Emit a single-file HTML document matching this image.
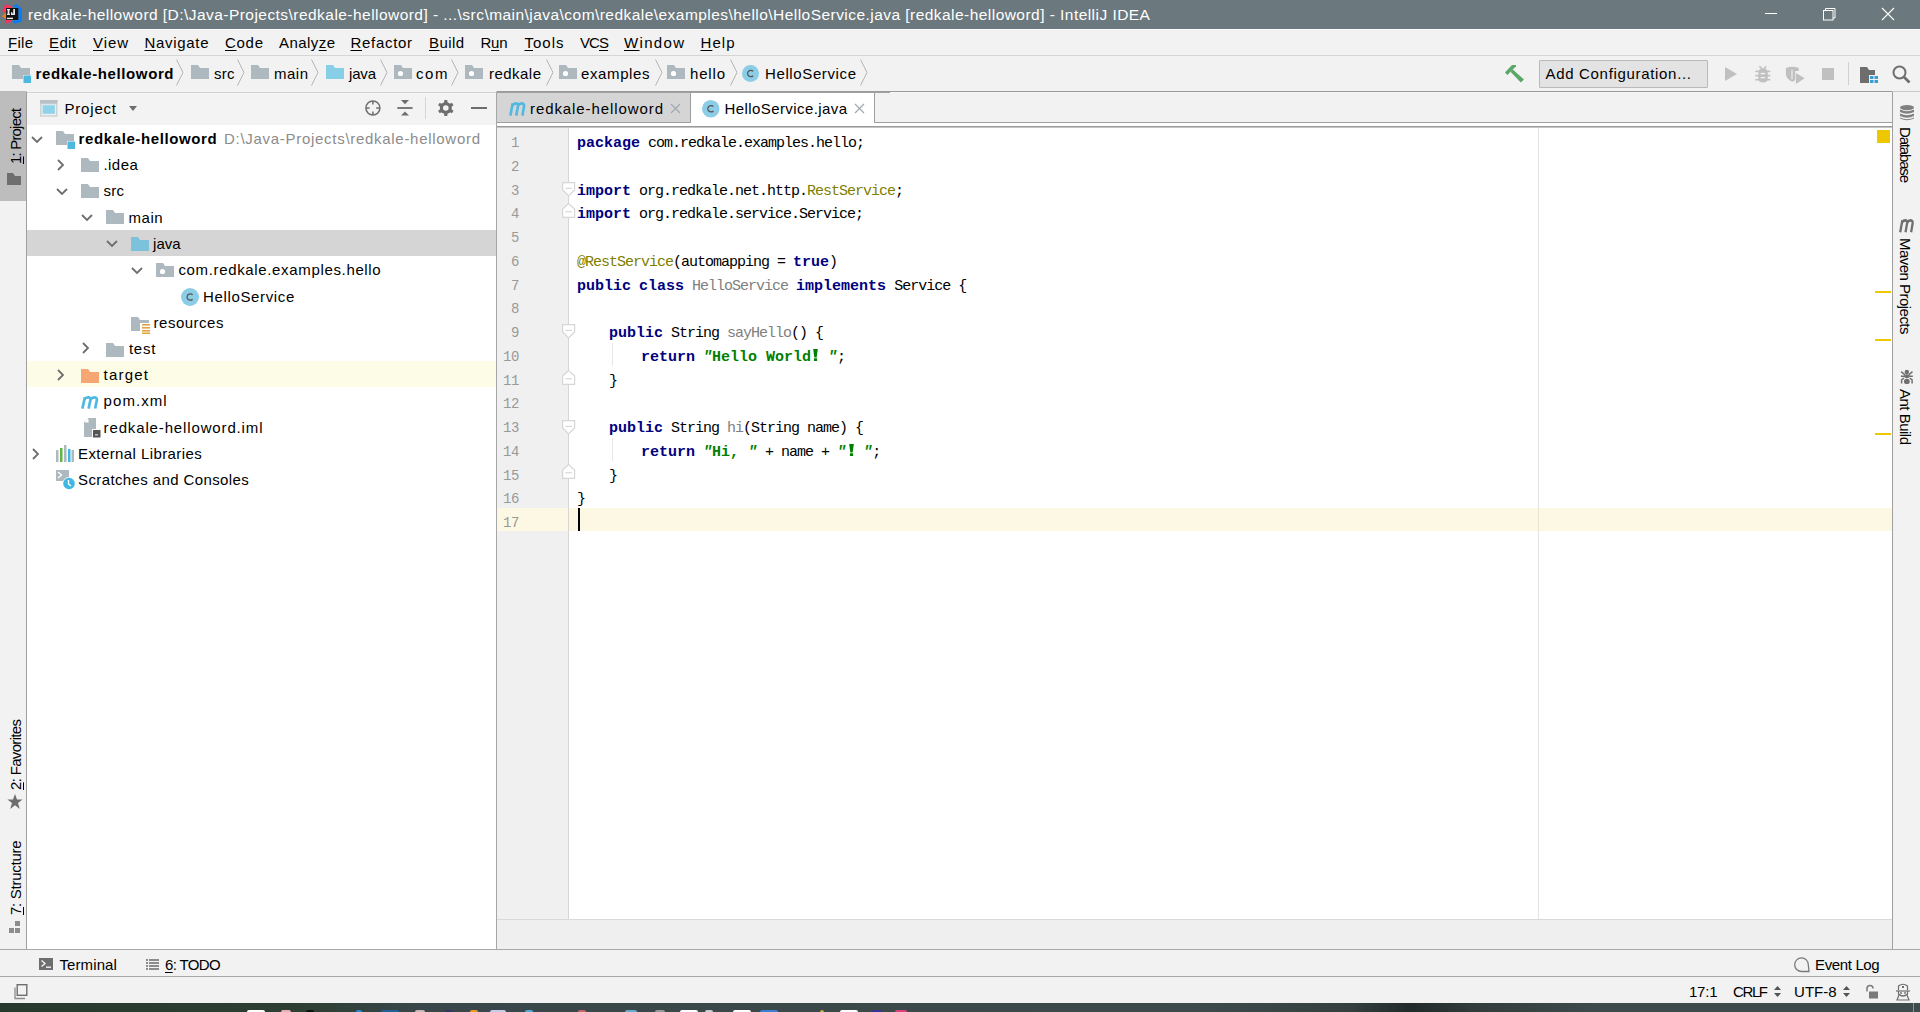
<!DOCTYPE html>
<html><head><meta charset="utf-8"><style>*{margin:0;padding:0;box-sizing:border-box}
html,body{width:1920px;height:1012px;overflow:hidden;background:#f2f2f2;font-family:"Liberation Sans",sans-serif;font-size:15px;color:#000}
.a{position:absolute}
.t{position:absolute;white-space:pre;line-height:1}
u{text-decoration:underline;text-underline-offset:2px;text-decoration-thickness:1px}
svg{position:absolute;overflow:visible}
.c{position:absolute;white-space:pre;line-height:1;font-family:"Liberation Mono",monospace;font-size:15px;letter-spacing:-1px}
.c b{letter-spacing:0}
</style></head><body>
<div class="a" style="left:0px;top:0px;width:1920px;height:29px;background:#6b787d;"></div>
<svg style="left:0px;top:0px;" width="28" height="28" viewBox="0 0 28 28">
<polygon points="5.5,3.9 11.5,6.4 12,8 6,8 6,13 2,11.5" fill="#fe315d"/>
<polygon points="5,19 12,19.5 11.5,21.5 5.3,23.8" fill="#fe315d"/>
<polygon points="2,16.3 6.2,12.5 6.2,19" fill="#f97a12"/>
<polygon points="12.5,6.5 16.5,3.9 22,9 22,21.5 15,23.8 11.5,21 18.3,20 18.3,8" fill="#087cfa"/>
<rect x="6.1" y="8" width="12.2" height="12" fill="#111"/>
<g fill="#e8e8e8"><rect x="7.6" y="9" width="1.8" height="6"/><rect x="6.9" y="9" width="3.1" height="1.2"/><rect x="6.9" y="13.8" width="3.1" height="1.2"/>
<rect x="13.2" y="9" width="1.8" height="5.2"/><rect x="11" y="13.6" width="4" height="1.4"/><rect x="11" y="12.2" width="1.4" height="2"/>
<rect x="6.9" y="17.7" width="6.1" height="1.4"/></g>
</svg>
<div class="t" style="left:28px;top:6.83px;font-size:15.5px;color:#fff;font-weight:normal;letter-spacing:0.455px;">redkale-helloword [D:\Java-Projects\redkale-helloword] - ...\src\main\java\com\redkale\examples\hello\HelloService.java [redkale-helloword] - IntelliJ IDEA</div>
<div class="a" style="left:1765px;top:13px;width:12px;height:1px;background:#fff;"></div>
<svg style="left:1823px;top:8px;" width="13" height="13" viewBox="0 0 13 13"><rect x="0.5" y="2.5" width="9.5" height="9.5" fill="none" stroke="#fff" stroke-width="1"/><path d="M2.5 2.5V0.5H12V10H10" fill="none" stroke="#fff" stroke-width="1"/></svg>
<svg style="left:1882px;top:8px;" width="12" height="12" viewBox="0 0 12 12"><path d="M0 0L12 12M12 0L0 12" stroke="#fff" stroke-width="1.1"/></svg>
<div class="a" style="left:0px;top:29px;width:1920px;height:1px;background:#fbfbfb;"></div>
<div class="a" style="left:0px;top:30px;width:1920px;height:25px;background:#f2f2f2;"></div>
<div class="a" style="left:0px;top:55px;width:1920px;height:1px;background:#d5d5d5;"></div>
<div class="t" style="left:8px;top:35.25px;font-size:15px;color:#000;font-weight:normal;letter-spacing:0.276px;"><u>F</u>ile</div>
<div class="t" style="left:49px;top:35.25px;font-size:15px;color:#000;font-weight:normal;letter-spacing:0.384px;"><u>E</u>dit</div>
<div class="t" style="left:93px;top:35.25px;font-size:15px;color:#000;font-weight:normal;letter-spacing:0.919px;"><u>V</u>iew</div>
<div class="t" style="left:144.5px;top:35.25px;font-size:15px;color:#000;font-weight:normal;letter-spacing:0.685px;"><u>N</u>avigate</div>
<div class="t" style="left:225px;top:35.25px;font-size:15px;color:#000;font-weight:normal;letter-spacing:0.713px;"><u>C</u>ode</div>
<div class="t" style="left:279px;top:35.25px;font-size:15px;color:#000;font-weight:normal;letter-spacing:0.439px;">Analy<u>z</u>e</div>
<div class="t" style="left:350.5px;top:35.25px;font-size:15px;color:#000;font-weight:normal;letter-spacing:0.687px;"><u>R</u>efactor</div>
<div class="t" style="left:429px;top:35.25px;font-size:15px;color:#000;font-weight:normal;letter-spacing:0.411px;"><u>B</u>uild</div>
<div class="t" style="left:480.5px;top:35.25px;font-size:15px;color:#000;font-weight:normal;letter-spacing:-0.259px;">R<u>u</u>n</div>
<div class="t" style="left:524.5px;top:35.25px;font-size:15px;color:#000;font-weight:normal;letter-spacing:0.996px;"><u>T</u>ools</div>
<div class="t" style="left:580px;top:35.25px;font-size:15px;color:#000;font-weight:normal;letter-spacing:-0.922px;">VC<u>S</u></div>
<div class="t" style="left:624px;top:35.25px;font-size:15px;color:#000;font-weight:normal;letter-spacing:1.330px;"><u>W</u>indow</div>
<div class="t" style="left:700.5px;top:35.25px;font-size:15px;color:#000;font-weight:normal;letter-spacing:1.050px;"><u>H</u>elp</div>
<div class="a" style="left:0px;top:56px;width:1920px;height:35px;background:#f2f2f2;"></div>
<div class="a" style="left:0px;top:91px;width:1920px;height:1px;background:#c8c8c8;"></div>
<svg style="left:12px;top:65px;" width="20" height="18" viewBox="0 0 20 18"><path d="M0 0H7L9 3H18V10H11V14H0Z" fill="#aeb8bf"/><rect x="11" y="10" width="8" height="8" fill="#f2f2f2"/><rect x="11.5" y="10.5" width="7.5" height="7.5" fill="#4fb8df"/></svg>
<div class="t" style="left:35.5px;top:66.25px;font-size:15px;color:#000;font-weight:bold;letter-spacing:0.602px;">redkale-helloword</div>
<svg style="left:176px;top:59px;" width="8" height="28" viewBox="0 0 8 28"><path d="M0.5 0.5L7 13.5L0.5 26.5" fill="none" stroke="#b5b5b5" stroke-width="1"/></svg>
<svg style="left:191px;top:65px;" width="18" height="14" viewBox="0 0 18 14"><path d="M0 0H7L9 3H18V14H0Z" fill="#aeb8bf"/></svg>
<div class="t" style="left:214px;top:66.25px;font-size:15px;color:#000;font-weight:normal;letter-spacing:0.252px;">src</div>
<svg style="left:237px;top:59px;" width="8" height="28" viewBox="0 0 8 28"><path d="M0.5 0.5L7 13.5L0.5 26.5" fill="none" stroke="#b5b5b5" stroke-width="1"/></svg>
<svg style="left:251px;top:65px;" width="18" height="14" viewBox="0 0 18 14"><path d="M0 0H7L9 3H18V14H0Z" fill="#aeb8bf"/></svg>
<div class="t" style="left:274px;top:66.25px;font-size:15px;color:#000;font-weight:normal;letter-spacing:0.495px;">main</div>
<svg style="left:311px;top:59px;" width="8" height="28" viewBox="0 0 8 28"><path d="M0.5 0.5L7 13.5L0.5 26.5" fill="none" stroke="#b5b5b5" stroke-width="1"/></svg>
<svg style="left:326px;top:65px;" width="18" height="14" viewBox="0 0 18 14"><path d="M0 0H7L9 3H18V14H0Z" fill="#87cee7"/></svg>
<div class="t" style="left:349px;top:66.25px;font-size:15px;color:#000;font-weight:normal;letter-spacing:-0.173px;">java</div>
<svg style="left:379.5px;top:59px;" width="8" height="28" viewBox="0 0 8 28"><path d="M0.5 0.5L7 13.5L0.5 26.5" fill="none" stroke="#b5b5b5" stroke-width="1"/></svg>
<svg style="left:394px;top:65px;" width="18" height="14" viewBox="0 0 18 14"><path d="M0 0H7L9 3H18V14H0Z" fill="#aeb8bf"/><circle cx="6.5" cy="8.5" r="2.6" fill="#fff"/></svg>
<div class="t" style="left:416px;top:66.25px;font-size:15px;color:#000;font-weight:normal;letter-spacing:1.581px;">com</div>
<svg style="left:451px;top:59px;" width="8" height="28" viewBox="0 0 8 28"><path d="M0.5 0.5L7 13.5L0.5 26.5" fill="none" stroke="#b5b5b5" stroke-width="1"/></svg>
<svg style="left:465px;top:65px;" width="18" height="14" viewBox="0 0 18 14"><path d="M0 0H7L9 3H18V14H0Z" fill="#aeb8bf"/><circle cx="6.5" cy="8.5" r="2.6" fill="#fff"/></svg>
<div class="t" style="left:489px;top:66.25px;font-size:15px;color:#000;font-weight:normal;letter-spacing:0.467px;">redkale</div>
<svg style="left:546px;top:59px;" width="8" height="28" viewBox="0 0 8 28"><path d="M0.5 0.5L7 13.5L0.5 26.5" fill="none" stroke="#b5b5b5" stroke-width="1"/></svg>
<svg style="left:559px;top:65px;" width="18" height="14" viewBox="0 0 18 14"><path d="M0 0H7L9 3H18V14H0Z" fill="#aeb8bf"/><circle cx="6.5" cy="8.5" r="2.6" fill="#fff"/></svg>
<div class="t" style="left:581px;top:66.25px;font-size:15px;color:#000;font-weight:normal;letter-spacing:0.614px;">examples</div>
<svg style="left:655px;top:59px;" width="8" height="28" viewBox="0 0 8 28"><path d="M0.5 0.5L7 13.5L0.5 26.5" fill="none" stroke="#b5b5b5" stroke-width="1"/></svg>
<svg style="left:667px;top:65px;" width="18" height="14" viewBox="0 0 18 14"><path d="M0 0H7L9 3H18V14H0Z" fill="#aeb8bf"/><circle cx="6.5" cy="8.5" r="2.6" fill="#fff"/></svg>
<div class="t" style="left:690px;top:66.25px;font-size:15px;color:#000;font-weight:normal;letter-spacing:0.827px;">hello</div>
<svg style="left:730px;top:59px;" width="8" height="28" viewBox="0 0 8 28"><path d="M0.5 0.5L7 13.5L0.5 26.5" fill="none" stroke="#b5b5b5" stroke-width="1"/></svg>
<svg style="left:742px;top:65px;" width="17" height="17" viewBox="0 0 17 17"><circle cx="8.5" cy="8.5" r="8.5" fill="#8bcde6"/><path d="M11.1 6.3A3.2 3.2 0 1 0 11.1 10.7" fill="none" stroke="#555" stroke-width="1.25"/></svg>
<div class="t" style="left:765px;top:66.25px;font-size:15px;color:#000;font-weight:normal;letter-spacing:0.618px;">HelloService</div>
<svg style="left:860px;top:59px;" width="8" height="28" viewBox="0 0 8 28"><path d="M0.5 0.5L7 13.5L0.5 26.5" fill="none" stroke="#b5b5b5" stroke-width="1"/></svg>
<svg style="left:1500px;top:58px;" width="30" height="30" viewBox="0 0 30 30"><path d="M5 14.5L12 7H16V8.2L12.8 11.6L7.4 17Z" fill="#59a869"/><path d="M10.5 13.8L12.8 11.4L24 21.4L20.8 24.4Z" fill="#59a869"/></svg>
<div class="a" style="left:1539px;top:60px;width:169px;height:28px;background:#e3e3e3;border:1px solid #b9b9b9;border-radius:1px"></div>
<div class="t" style="left:1545.5px;top:65.55px;font-size:15px;color:#000;font-weight:normal;letter-spacing:0.680px;">Add Configuration...</div>
<svg style="left:1725px;top:67px;" width="13" height="14" viewBox="0 0 13 14"><path d="M0 0L12 7L0 14Z" fill="#c0c0c0"/></svg>
<svg style="left:1750px;top:62px;" width="30" height="30" viewBox="0 0 30 30"><g fill="#c0c0c0"><path d="M8.4 11Q8.4 6.25 13.1 6.25Q17.8 6.25 17.8 11V16Q17.8 20.6 13.1 20.6Q8.4 20.6 8.4 16Z"/><rect x="5.3" y="8.6" width="15" height="1.6"/><rect x="5.3" y="12.8" width="15" height="1.6"/><rect x="5.3" y="16.9" width="15" height="1.6"/></g><path d="M9.4 4.4L11.8 6.6M16.25 4.4L13.9 6.6" stroke="#c0c0c0" stroke-width="1.6"/><rect x="10.6" y="10.9" width="4.4" height="1.4" fill="#f2f2f2"/><rect x="10.6" y="15" width="4.4" height="1.3" fill="#f2f2f2"/></svg>
<svg style="left:1750px;top:62px;" width="30" height="30" viewBox="0 0 30 30"><path d="M35.9 6Q42.2 3.6 48.75 6V9H45.2V17Q45.2 19.2 42.2 19.7Q35.9 17 35.9 12Z" fill="#c0c0c0"/><path d="M42 7.8V17.3" stroke="#f2f2f2" stroke-width="1.1"/><path d="M45.9 10.9L54.7 16.25L45.9 21.9Z" fill="#c0c0c0"/></svg>
<div class="a" style="left:1822px;top:68px;width:12px;height:12px;background:#c0c0c0;"></div>
<div class="a" style="left:1848px;top:62px;width:1px;height:23px;background:#d0d0d0;"></div>
<svg style="left:1860px;top:67px;" width="19" height="16" viewBox="0 0 19 16"><path d="M0 0H7L9 3H15V8H9V16H0Z" fill="#6e6e6e"/><g fill="#389fd6"><rect x="10" y="9" width="3.5" height="3"/><rect x="14.5" y="9" width="3.5" height="3"/><rect x="10" y="13" width="3.5" height="3"/><rect x="14.5" y="13" width="3.5" height="3"/></g></svg>
<svg style="left:1892px;top:65px;" width="19" height="19" viewBox="0 0 19 19"><circle cx="7.5" cy="7.5" r="6" fill="none" stroke="#6e6e6e" stroke-width="2"/><path d="M12 12L17.5 17.5" stroke="#6e6e6e" stroke-width="2.6"/></svg>
<div class="a" style="left:0px;top:92px;width:26px;height:857px;background:#f2f2f2;"></div>
<div class="a" style="left:26px;top:92px;width:1px;height:857px;background:#9f9f9f;"></div>
<div class="a" style="left:0px;top:91px;width:26px;height:110px;background:#bdbdbd;"></div>
<div class="t" style="left:8.25px;top:164px;font-size:15px;color:#000;letter-spacing:-0.818px;transform-origin:0 0;transform:rotate(-90deg)"><u>1</u>: Project</div>
<svg style="left:7px;top:173px;" width="15" height="13" viewBox="0 0 15 13"><path d="M0 0H6L8 3H14V12H0Z" fill="#6e6e6e"/></svg>
<div class="t" style="left:8.25px;top:790px;font-size:15px;color:#000;letter-spacing:-0.669px;transform-origin:0 0;transform:rotate(-90deg)"><u>2</u>: Favorites</div>
<svg style="left:7px;top:794px;" width="16" height="16" viewBox="0 0 16 16"><path d="M8 0L10 5.6H15.6L11 9L12.8 15L8 11.3L3.2 15L5 9L0.4 5.6H6Z" fill="#6e6e6e"/></svg>
<div class="t" style="left:8.25px;top:915px;font-size:15px;color:#000;letter-spacing:-0.276px;transform-origin:0 0;transform:rotate(-90deg)"><u>7</u>: Structure</div>
<svg style="left:8px;top:921px;" width="14" height="14" viewBox="0 0 14 14"><g fill="#8c8c8c"><rect x="7" y="0" width="5" height="5"/><rect x="1" y="7" width="5" height="5"/><rect x="7" y="7" width="5" height="5"/></g></svg>
<div class="a" style="left:27px;top:91px;width:469px;height:1px;background:#f5f5f5;"></div>
<div class="a" style="left:27px;top:92px;width:469px;height:1px;background:#d0d0d0;"></div>
<div class="a" style="left:27px;top:93px;width:469px;height:1px;background:#f7f7f7;"></div>
<div class="a" style="left:27px;top:94px;width:469px;height:31px;background:#f3f3f3;"></div>
<div class="a" style="left:27px;top:125px;width:469px;height:824px;background:#ffffff;"></div>
<div class="a" style="left:496px;top:92px;width:1px;height:857px;background:#a6a6a6;"></div>
<svg style="left:40.3px;top:100.3px;" width="18" height="17" viewBox="0 0 18 17"><rect x="0" y="0" width="17.5" height="16.7" fill="#cdd2d5"/><rect x="0" y="0" width="17.5" height="3.4" fill="#b9c1c6"/><rect x="1.6" y="4.4" width="14.3" height="10.8" fill="#eef2f3"/><rect x="2.6" y="5.2" width="12.3" height="8.6" fill="#8fd3ea"/></svg>
<div class="t" style="left:64.5px;top:101.25px;font-size:15px;color:#000;font-weight:normal;letter-spacing:0.802px;">Project</div>
<svg style="left:129px;top:106px;" width="8" height="5" viewBox="0 0 8 5"><path d="M0 0H8L4 5Z" fill="#6e6e6e"/></svg>
<svg style="left:365px;top:100px;" width="16" height="16" viewBox="0 0 16 16"><circle cx="7.9" cy="8" r="7" fill="none" stroke="#6e6e6e" stroke-width="1.5"/><path d="M7.9 1V4.6M7.9 11.4V15M1 8H4.6M11.2 8H14.8" stroke="#6e6e6e" stroke-width="1.5"/></svg>
<svg style="left:397px;top:99px;" width="16" height="18" viewBox="0 0 16 18"><path d="M4 1H12L8 5.3Z" fill="#6e6e6e"/><path d="M0.3 9H15.6" stroke="#6e6e6e" stroke-width="1.8"/><path d="M4 16.6H12L8 12.6Z" fill="#6e6e6e"/></svg>
<div class="a" style="left:425px;top:97px;width:1px;height:22px;background:#d4d4d4;"></div>
<svg style="left:437px;top:99px;" width="18" height="18" viewBox="0 0 18 18"><g fill="#6e6e6e"><circle cx="8.8" cy="9" r="6"/><rect x="7.2" y="1" width="3.2" height="16" rx="0.6"/><rect x="7.2" y="1" width="3.2" height="16" rx="0.6" transform="rotate(60 8.8 9)"/><rect x="7.2" y="1" width="3.2" height="16" rx="0.6" transform="rotate(-60 8.8 9)"/></g><circle cx="8.8" cy="9" r="2.8" fill="#f2f2f2"/></svg>
<div class="a" style="left:471px;top:107px;width:16px;height:2px;background:#6e6e6e;"></div>
<div class="a" style="left:27px;top:230px;width:469px;height:26px;background:#d5d5d5;"></div>
<div class="a" style="left:27px;top:361px;width:469px;height:26px;background:#fdfce6;"></div>
<svg style="left:31px;top:136px;" width="12" height="8" viewBox="0 0 12 8"><path d="M1 1L6 6L11 1" fill="none" stroke="#6e6e6e" stroke-width="1.8"/></svg>
<svg style="left:56px;top:131px;" width="20" height="18" viewBox="0 0 20 18"><path d="M0 0H7L9 3H18V10H11V14H0Z" fill="#aeb8bf"/><rect x="11" y="10" width="8" height="8" fill="#ffffff"/><rect x="11.5" y="10.5" width="7.5" height="7.5" fill="#4fb8df"/></svg>
<div class="t" style="left:78.6px;top:131.25px;font-size:15px;color:#000;font-weight:bold;letter-spacing:0.602px;">redkale-helloword</div>
<div class="t" style="left:224px;top:131.25px;font-size:15px;color:#8c8c8c;font-weight:normal;letter-spacing:0.709px;">D:\Java-Projects\redkale-helloword</div>
<svg style="left:57px;top:159px;" width="8" height="12" viewBox="0 0 8 12"><path d="M1 1L6 6L1 11" fill="none" stroke="#6e6e6e" stroke-width="1.8"/></svg>
<svg style="left:81px;top:158px;" width="18" height="14" viewBox="0 0 18 14"><path d="M0 0H7L9 3H18V14H0Z" fill="#aeb8bf"/></svg>
<div class="t" style="left:103.4px;top:157.25px;font-size:15px;color:#000;font-weight:normal;letter-spacing:0.468px;">.idea</div>
<svg style="left:56px;top:188px;" width="12" height="8" viewBox="0 0 12 8"><path d="M1 1L6 6L11 1" fill="none" stroke="#6e6e6e" stroke-width="1.8"/></svg>
<svg style="left:81px;top:184px;" width="18" height="14" viewBox="0 0 18 14"><path d="M0 0H7L9 3H18V14H0Z" fill="#aeb8bf"/></svg>
<div class="t" style="left:103.4px;top:183.25px;font-size:15px;color:#000;font-weight:normal;letter-spacing:0.302px;">src</div>
<svg style="left:81px;top:214px;" width="12" height="8" viewBox="0 0 12 8"><path d="M1 1L6 6L11 1" fill="none" stroke="#6e6e6e" stroke-width="1.8"/></svg>
<svg style="left:106px;top:210px;" width="18" height="14" viewBox="0 0 18 14"><path d="M0 0H7L9 3H18V14H0Z" fill="#aeb8bf"/></svg>
<div class="t" style="left:128.6px;top:210.25px;font-size:15px;color:#000;font-weight:normal;letter-spacing:0.495px;">main</div>
<svg style="left:106px;top:240px;" width="12" height="8" viewBox="0 0 12 8"><path d="M1 1L6 6L11 1" fill="none" stroke="#6e6e6e" stroke-width="1.8"/></svg>
<svg style="left:131px;top:237px;" width="18" height="14" viewBox="0 0 18 14"><path d="M0 0H7L9 3H18V14H0Z" fill="#7cc2dc"/></svg>
<div class="t" style="left:153px;top:236.25px;font-size:15px;color:#000;font-weight:normal;letter-spacing:0.061px;">java</div>
<svg style="left:131px;top:267px;" width="12" height="8" viewBox="0 0 12 8"><path d="M1 1L6 6L11 1" fill="none" stroke="#6e6e6e" stroke-width="1.8"/></svg>
<svg style="left:156px;top:263px;" width="18" height="14" viewBox="0 0 18 14"><path d="M0 0H7L9 3H18V14H0Z" fill="#aeb8bf"/><circle cx="6.5" cy="8.5" r="2.6" fill="#fff"/></svg>
<div class="t" style="left:178.4px;top:262.25px;font-size:15px;color:#000;font-weight:normal;letter-spacing:0.655px;">com.redkale.examples.hello</div>
<svg style="left:181px;top:288px;" width="18" height="18" viewBox="0 0 18 18"><circle cx="9.0" cy="9.0" r="9.0" fill="#8bcde6"/><path d="M11.6 6.8A3.2 3.2 0 1 0 11.6 11.2" fill="none" stroke="#555" stroke-width="1.25"/></svg>
<div class="t" style="left:203px;top:289.25px;font-size:15px;color:#000;font-weight:normal;letter-spacing:0.645px;">HelloService</div>
<svg style="left:131px;top:317px;" width="20" height="17" viewBox="0 0 20 17"><path d="M0 0H7L9 3H18V14H0Z" fill="#aeb8bf"/><rect x="9" y="6" width="11" height="11" fill="#fff"/><g fill="#e3a23f"><rect x="11" y="7" width="8" height="1.6"/><rect x="11" y="10" width="8" height="1.6"/><rect x="11" y="13" width="8" height="1.6"/><rect x="11" y="15.5" width="8" height="1.5"/></g></svg>
<div class="t" style="left:153.6px;top:315.25px;font-size:15px;color:#000;font-weight:normal;letter-spacing:0.492px;">resources</div>
<svg style="left:82px;top:342px;" width="8" height="12" viewBox="0 0 8 12"><path d="M1 1L6 6L1 11" fill="none" stroke="#6e6e6e" stroke-width="1.8"/></svg>
<svg style="left:106px;top:343px;" width="18" height="14" viewBox="0 0 18 14"><path d="M0 0H7L9 3H18V14H0Z" fill="#aeb8bf"/></svg>
<div class="t" style="left:128.9px;top:341.25px;font-size:15px;color:#000;font-weight:normal;letter-spacing:0.808px;">test</div>
<svg style="left:57px;top:369px;" width="8" height="12" viewBox="0 0 8 12"><path d="M1 1L6 6L1 11" fill="none" stroke="#6e6e6e" stroke-width="1.8"/></svg>
<svg style="left:81px;top:369px;" width="18" height="14" viewBox="0 0 18 14"><path d="M0 0H7L9 3H18V14H0Z" fill="#f5a673"/></svg>
<div class="t" style="left:103.6px;top:367.25px;font-size:15px;color:#000;font-weight:normal;letter-spacing:1.208px;">target</div>
<svg style="left:81px;top:396px;" width="18" height="13" viewBox="0 0 18 13"><g transform="scale(1.0 1.0)" fill="none" stroke="#4fb9e1" stroke-width="2.7" stroke-linejoin="round"><path d="M1.4 12.6L3.9 1.3"/><path d="M3.4 3.2Q5.2 1.2 7.6 1.3Q10 1.5 9.4 4L7.6 12.6"/><path d="M9.3 3.6Q11 1.2 13.6 1.3Q16.4 1.5 15.8 4.4L14.1 12.6"/></g></svg>
<div class="t" style="left:103.6px;top:393.25px;font-size:15px;color:#000;font-weight:normal;letter-spacing:1.071px;">pom.xml</div>
<svg style="left:84px;top:418px;" width="17" height="20" viewBox="0 0 17 20"><path d="M4 0H12V19H0V4Z" fill="#aeb8bf"/><path d="M0 4H4V0Z" fill="#fff"/><path d="M1 4.5H4.5V1" fill="none" stroke="#d6dadd" stroke-width="1"/><rect x="8" y="11" width="9" height="9" fill="#fff"/><rect x="9" y="12" width="7.5" height="7.5" fill="#555"/><rect x="11" y="16" width="3" height="1.5" fill="#bbb"/></svg>
<div class="t" style="left:103.6px;top:420.25px;font-size:15px;color:#000;font-weight:normal;letter-spacing:0.858px;">redkale-helloword.iml</div>
<svg style="left:32px;top:448px;" width="8" height="12" viewBox="0 0 8 12"><path d="M1 1L6 6L1 11" fill="none" stroke="#6e6e6e" stroke-width="1.8"/></svg>
<svg style="left:56px;top:445px;" width="18" height="17" viewBox="0 0 18 17"><g fill="#aeb8bf"><rect x="0" y="5" width="2.5" height="12"/><rect x="8" y="0" width="2.5" height="17"/><rect x="15.5" y="5" width="2.5" height="12"/></g><rect x="4" y="3" width="2.5" height="14" fill="#62b543"/><rect x="12" y="4" width="2.5" height="13" fill="#40b6e0"/></svg>
<div class="t" style="left:78px;top:446.25px;font-size:15px;color:#000;font-weight:normal;letter-spacing:0.416px;">External Libraries</div>
<svg style="left:56px;top:470px;" width="20" height="20" viewBox="0 0 20 20"><rect x="0" y="0" width="13" height="11" fill="#aeb8bf"/><path d="M2 2L5.5 5L2 8" fill="none" stroke="#fff" stroke-width="1.3"/><circle cx="13" cy="13.5" r="6.5" fill="#fff"/><circle cx="13" cy="13.5" r="5.8" fill="#40b6e0"/><path d="M12.5 10V14L15 16" fill="none" stroke="#fff" stroke-width="1.4"/></svg>
<div class="t" style="left:78px;top:472.25px;font-size:15px;color:#000;font-weight:normal;letter-spacing:0.386px;">Scratches and Consoles</div>
<div class="a" style="left:497px;top:91px;width:1395px;height:1px;background:#9a9a9a;"></div>
<div class="a" style="left:497px;top:92px;width:1395px;height:1px;background:#f6f6f6;"></div>
<div class="a" style="left:497px;top:92px;width:393px;height:1px;background:#a0a0a0;"></div>
<div class="a" style="left:497px;top:93px;width:1395px;height:29px;background:#f2f2f2;"></div>
<div class="a" style="left:497px;top:122px;width:1395px;height:1px;background:#9e9e9e;"></div>
<div class="a" style="left:497px;top:123px;width:1395px;height:3px;background:#ffffff;"></div>
<div class="a" style="left:497px;top:126px;width:1395px;height:1px;background:#9a9a9a;"></div>
<div class="a" style="left:497px;top:127px;width:1395px;height:1px;background:#c4c4c4;"></div>
<div class="a" style="left:497px;top:93px;width:193px;height:29px;background:#d5d5d5;"></div>
<div class="a" style="left:690px;top:93px;width:1px;height:29px;background:#9e9e9e;"></div>
<div class="a" style="left:691px;top:93px;width:183px;height:33px;background:#ffffff;"></div>
<div class="a" style="left:874px;top:93px;width:1px;height:29px;background:#9e9e9e;"></div>
<svg style="left:509px;top:102px;" width="18" height="13" viewBox="0 0 18 13"><g transform="scale(0.95 1.08)" fill="none" stroke="#4fb9e1" stroke-width="2.7" stroke-linejoin="round"><path d="M1.4 12.6L3.9 1.3"/><path d="M3.4 3.2Q5.2 1.2 7.6 1.3Q10 1.5 9.4 4L7.6 12.6"/><path d="M9.3 3.6Q11 1.2 13.6 1.3Q16.4 1.5 15.8 4.4L14.1 12.6"/></g></svg>
<div class="t" style="left:530px;top:101.25px;font-size:15px;color:#000;font-weight:normal;letter-spacing:0.912px;">redkale-helloword</div>
<svg style="left:671px;top:104px;" width="9" height="9" viewBox="0 0 9 9"><path d="M0 0L9 9M9 0L0 9" stroke="#a3a8ac" stroke-width="1.2"/></svg>
<svg style="left:702px;top:100px;" width="17.5" height="17.5" viewBox="0 0 17.5 17.5"><circle cx="8.75" cy="8.75" r="8.75" fill="#8bcde6"/><path d="M11.35 6.55A3.2 3.2 0 1 0 11.35 10.95" fill="none" stroke="#555" stroke-width="1.25"/></svg>
<div class="t" style="left:724.6px;top:101.25px;font-size:15px;color:#000;font-weight:normal;letter-spacing:0.407px;">HelloService.java</div>
<svg style="left:855px;top:104px;" width="9" height="9" viewBox="0 0 9 9"><path d="M0 0L9 9M9 0L0 9" stroke="#a3a8ac" stroke-width="1.2"/></svg>
<div class="a" style="left:497px;top:128px;width:71px;height:791px;background:#f0f0f0;"></div>
<div class="a" style="left:568px;top:128px;width:1px;height:791px;background:#d6d6d6;"></div>
<div class="a" style="left:569px;top:128px;width:1323px;height:791px;background:#ffffff;"></div>
<div class="a" style="left:1538px;top:128px;width:1px;height:791px;background:#e3e3e3;"></div>
<div class="a" style="left:497px;top:508px;width:71px;height:23px;background:#fdf8e3;"></div>
<div class="a" style="left:569px;top:508px;width:1323px;height:23px;background:#fdf8e3;"></div>
<div class="a" style="left:1538px;top:508px;width:1px;height:23px;background:#ebe6d2;"></div>
<div class="c" style="left:511px;top:136.10px;color:#999999;font-size:14px;letter-spacing:-0.4px">1</div>
<div class="c" style="left:511px;top:159.85px;color:#999999;font-size:14px;letter-spacing:-0.4px">2</div>
<div class="c" style="left:511px;top:183.60px;color:#999999;font-size:14px;letter-spacing:-0.4px">3</div>
<div class="c" style="left:511px;top:207.35px;color:#999999;font-size:14px;letter-spacing:-0.4px">4</div>
<div class="c" style="left:511px;top:231.10px;color:#999999;font-size:14px;letter-spacing:-0.4px">5</div>
<div class="c" style="left:511px;top:254.85px;color:#999999;font-size:14px;letter-spacing:-0.4px">6</div>
<div class="c" style="left:511px;top:278.60px;color:#999999;font-size:14px;letter-spacing:-0.4px">7</div>
<div class="c" style="left:511px;top:302.35px;color:#999999;font-size:14px;letter-spacing:-0.4px">8</div>
<div class="c" style="left:511px;top:326.10px;color:#999999;font-size:14px;letter-spacing:-0.4px">9</div>
<div class="c" style="left:503px;top:349.85px;color:#999999;font-size:14px;letter-spacing:-0.4px">10</div>
<div class="c" style="left:503px;top:373.60px;color:#999999;font-size:14px;letter-spacing:-0.4px">11</div>
<div class="c" style="left:503px;top:397.35px;color:#999999;font-size:14px;letter-spacing:-0.4px">12</div>
<div class="c" style="left:503px;top:421.10px;color:#999999;font-size:14px;letter-spacing:-0.4px">13</div>
<div class="c" style="left:503px;top:444.85px;color:#999999;font-size:14px;letter-spacing:-0.4px">14</div>
<div class="c" style="left:503px;top:468.60px;color:#999999;font-size:14px;letter-spacing:-0.4px">15</div>
<div class="c" style="left:503px;top:492.35px;color:#999999;font-size:14px;letter-spacing:-0.4px">16</div>
<div class="c" style="left:503px;top:516.10px;color:#999999;font-size:14px;letter-spacing:-0.4px">17</div>
<svg style="left:562px;top:182px;" width="14" height="15" viewBox="0 0 14 15"><path d="M0.6 0.6H12.6V8L6.6 14L0.6 8Z" fill="#fff" stroke="#d6d6d6" stroke-width="1.2"/><path d="M3.3 6.3H9.9" stroke="#d0d0d0" stroke-width="1"/></svg>
<svg style="left:562px;top:203px;" width="14" height="15" viewBox="0 0 14 15"><path d="M0.6 14.4H12.6V6L6.6 0.6L0.6 6Z" fill="#fff" stroke="#d6d6d6" stroke-width="1.2"/><path d="M3.3 8.8H9.9" stroke="#d0d0d0" stroke-width="1"/></svg>
<svg style="left:562px;top:324px;" width="14" height="15" viewBox="0 0 14 15"><path d="M0.6 0.6H12.6V8L6.6 14L0.6 8Z" fill="#fff" stroke="#d6d6d6" stroke-width="1.2"/><path d="M3.3 6.3H9.9" stroke="#d0d0d0" stroke-width="1"/></svg>
<svg style="left:562px;top:370px;" width="14" height="15" viewBox="0 0 14 15"><path d="M0.6 14.4H12.6V6L6.6 0.6L0.6 6Z" fill="#fff" stroke="#d6d6d6" stroke-width="1.2"/><path d="M3.3 8.8H9.9" stroke="#d0d0d0" stroke-width="1"/></svg>
<svg style="left:562px;top:420px;" width="14" height="15" viewBox="0 0 14 15"><path d="M0.6 0.6H12.6V8L6.6 14L0.6 8Z" fill="#fff" stroke="#d6d6d6" stroke-width="1.2"/><path d="M3.3 6.3H9.9" stroke="#d0d0d0" stroke-width="1"/></svg>
<svg style="left:562px;top:464px;" width="14" height="15" viewBox="0 0 14 15"><path d="M0.6 14.4H12.6V6L6.6 0.6L0.6 6Z" fill="#fff" stroke="#d6d6d6" stroke-width="1.2"/><path d="M3.3 8.8H9.9" stroke="#d0d0d0" stroke-width="1"/></svg>
<div class="a" style="left:612px;top:343px;width:1px;height:23px;background:#e6e6e6;"></div>
<div class="a" style="left:612px;top:438px;width:1px;height:23px;background:#e6e6e6;"></div>
<div class="c" style="left:577px;top:136.10px"><b style="color:#000080">package</b><span style="color:#000"> com.redkale.examples.hello;</span></div>
<div class="c" style="left:577px;top:183.60px"><b style="color:#000080">import</b><span style="color:#000"> org.redkale.net.http.</span><span style="color:#808000">RestService</span><span style="color:#000">;</span></div>
<div class="c" style="left:577px;top:207.35px"><b style="color:#000080">import</b><span style="color:#000"> org.redkale.service.Service;</span></div>
<div class="c" style="left:577px;top:254.85px"><span style="color:#808000">@RestService</span><span style="color:#000">(automapping = </span><b style="color:#000080">true</b><span style="color:#000">)</span></div>
<div class="c" style="left:577px;top:278.60px"><b style="color:#000080">public</b><span style="color:#000"> </span><b style="color:#000080">class</b><span style="color:#000"> </span><span style="color:#808080">HelloService</span><span style="color:#000"> </span><b style="color:#000080">implements</b><span style="color:#000"> Service {</span></div>
<div class="c" style="left:577px;top:326.10px"><span style="color:#000">    </span><b style="color:#000080">public</b><span style="color:#000"> String </span><span style="color:#808080">sayHello</span><span style="color:#000">() {</span></div>
<div class="c" style="left:577px;top:349.85px"><span style="color:#000">        </span><b style="color:#000080">return</b><span style="color:#000"> </span><b style="color:#008000"><i>&quot;</i>Hello World<span style="display:inline-block;position:relative;width:17px;height:0;vertical-align:baseline"><svg style="left:2.4px;top:-12px" width="5" height="12" viewBox="0 0 5 12"><path d="M0.2 0H4.8L3.7 8.4H1.3Z" fill="#008000"/><rect x="0.9" y="9.3" width="3.2" height="2.7" fill="#008000"/></svg></span><i>&quot;</i></b><span style="color:#000">;</span></div>
<div class="c" style="left:577px;top:373.60px"><span style="color:#000">    }</span></div>
<div class="c" style="left:577px;top:421.10px"><span style="color:#000">    </span><b style="color:#000080">public</b><span style="color:#000"> String </span><span style="color:#808080">hi</span><span style="color:#000">(String name) {</span></div>
<div class="c" style="left:577px;top:444.85px"><span style="color:#000">        </span><b style="color:#000080">return</b><span style="color:#000"> </span><b style="color:#008000"><i>&quot;</i>Hi, <i>&quot;</i></b><span style="color:#000"> + name + </span><b style="color:#008000"><i>&quot;</i><span style="display:inline-block;position:relative;width:17px;height:0;vertical-align:baseline"><svg style="left:2.4px;top:-12px" width="5" height="12" viewBox="0 0 5 12"><path d="M0.2 0H4.8L3.7 8.4H1.3Z" fill="#008000"/><rect x="0.9" y="9.3" width="3.2" height="2.7" fill="#008000"/></svg></span><i>&quot;</i></b><span style="color:#000">;</span></div>
<div class="c" style="left:577px;top:468.60px"><span style="color:#000">    }</span></div>
<div class="c" style="left:577px;top:492.35px"><span style="color:#000">}</span></div>
<div class="a" style="left:578px;top:508px;width:2px;height:23px;background:#000;"></div>
<div class="a" style="left:1877px;top:130px;width:13px;height:13px;background:#edc700;"></div>
<div class="a" style="left:1875px;top:291px;width:16px;height:2px;background:#edc700;"></div>
<div class="a" style="left:1875px;top:339px;width:16px;height:2px;background:#edc700;"></div>
<div class="a" style="left:1875px;top:433px;width:16px;height:2px;background:#edc700;"></div>
<div class="a" style="left:497px;top:919px;width:1395px;height:1px;background:#d9d9d9;"></div>
<div class="a" style="left:497px;top:920px;width:1395px;height:29px;background:#efefef;"></div>
<div class="a" style="left:1892px;top:92px;width:1px;height:857px;background:#a0a0a0;"></div>
<div class="a" style="left:1893px;top:92px;width:27px;height:857px;background:#f2f2f2;"></div>
<svg style="left:1900px;top:105px;" width="14" height="16" viewBox="0 0 14 16"><g fill="#808080"><ellipse cx="7" cy="2.6" rx="7" ry="2.6"/><path d="M0 4.5Q7 8 14 4.5V7Q7 10.5 0 7Z"/><path d="M0 8.5Q7 12 14 8.5V11Q7 14.5 0 11Z"/><path d="M0 12.5Q7 16 14 12.5V13.5Q7 17 0 13.5Z"/></g></svg>
<div class="t" style="left:1912.75px;top:127px;font-size:15px;color:#000;letter-spacing:-1.173px;transform-origin:0 0;transform:rotate(90deg)">Database</div>
<svg style="left:1899px;top:219px;" width="18" height="13" viewBox="0 0 18 13"><g transform="scale(0.86 1.05)" fill="none" stroke="#707070" stroke-width="2.7" stroke-linejoin="round"><path d="M1.4 12.6L3.9 1.3"/><path d="M3.4 3.2Q5.2 1.2 7.6 1.3Q10 1.5 9.4 4L7.6 12.6"/><path d="M9.3 3.6Q11 1.2 13.6 1.3Q16.4 1.5 15.8 4.4L14.1 12.6"/></g></svg>
<div class="t" style="left:1912.75px;top:238px;font-size:15px;color:#000;letter-spacing:-0.529px;transform-origin:0 0;transform:rotate(90deg)">Maven Projects</div>
<svg style="left:1894px;top:364px;" width="26" height="26" viewBox="0 0 26 26"><g fill="#707070"><circle cx="12.85" cy="8" r="2.2"/><ellipse cx="12.85" cy="12.3" rx="2.6" ry="2"/><ellipse cx="12.85" cy="17.4" rx="2.9" ry="2.6"/></g><g fill="none" stroke="#707070" stroke-width="1.5"><path d="M7.2 7.7L11 10.8M18.5 7.7L14.7 10.8M6.9 12.3H18.8M10 14L7.6 15.9V19.6M15.7 14L18.1 15.9V19.6"/></g></svg>
<div class="t" style="left:1912.75px;top:389px;font-size:15px;color:#000;letter-spacing:-0.505px;transform-origin:0 0;transform:rotate(90deg)">Ant Build</div>
<div class="a" style="left:0px;top:949px;width:1920px;height:1px;background:#a8a8a8;"></div>
<div class="a" style="left:0px;top:950px;width:1920px;height:26px;background:#f2f2f2;"></div>
<div class="a" style="left:0px;top:976px;width:1920px;height:1px;background:#a8a8a8;"></div>
<svg style="left:39px;top:958px;" width="14" height="12" viewBox="0 0 14 12"><rect x="0" y="0" width="14" height="12" fill="#6e6e6e"/><path d="M2.5 2.5L6 5.5L2.5 8.5" fill="none" stroke="#f2f2f2" stroke-width="1.4"/><rect x="7" y="8.5" width="5" height="1.4" fill="#f2f2f2"/></svg>
<div class="t" style="left:59.4px;top:957.25px;font-size:15px;color:#000;font-weight:normal;letter-spacing:0.116px;">Terminal</div>
<svg style="left:146px;top:959px;" width="13" height="11" viewBox="0 0 13 11"><g fill="#8c8c8c"><rect x="0" y="0" width="2" height="2"/><rect x="3" y="0" width="10" height="2"/><rect x="0" y="3" width="2" height="2"/><rect x="3" y="3" width="10" height="2"/><rect x="0" y="6" width="2" height="2"/><rect x="3" y="6" width="10" height="2"/><rect x="0" y="9" width="2" height="2"/><rect x="3" y="9" width="10" height="2"/></g></svg>
<div class="t" style="left:165px;top:957.25px;font-size:15px;color:#000;font-weight:normal;letter-spacing:-0.644px;"><u>6</u>: TODO</div>
<svg style="left:1794px;top:957px;" width="16" height="15" viewBox="0 0 16 15"><path d="M15 14.5H7.5A6.8 6.8 0 1 1 14.3 7.7Z" fill="none" stroke="#7a7a7a" stroke-width="1.3"/></svg>
<div class="t" style="left:1815px;top:957.25px;font-size:15px;color:#000;font-weight:normal;letter-spacing:-0.357px;">Event Log</div>
<div class="a" style="left:0px;top:977px;width:1920px;height:26px;background:#f2f2f2;"></div>
<svg style="left:12px;top:984px;" width="16" height="16" viewBox="0 0 16 16"><path d="M3 3.5V14.5H13" fill="none" stroke="#8c8c8c" stroke-width="1.3"/><rect x="5.2" y="0.7" width="9.6" height="10.6" fill="none" stroke="#6e6e6e" stroke-width="1.4"/></svg>
<div class="t" style="left:1689px;top:984.25px;font-size:15px;color:#000;font-weight:normal;letter-spacing:-0.232px;">17:1</div>
<div class="t" style="left:1733px;top:984.25px;font-size:15px;color:#000;font-weight:normal;letter-spacing:-1.390px;">CRLF</div>
<svg style="left:1774px;top:986px;" width="7" height="11" viewBox="0 0 7 11"><path d="M0 4H7L3.5 0Z M0 7H7L3.5 11Z" fill="#555"/></svg>
<div class="t" style="left:1794px;top:984.25px;font-size:15px;color:#000;font-weight:normal;letter-spacing:0.051px;">UTF-8</div>
<svg style="left:1842.5px;top:986px;" width="7" height="11" viewBox="0 0 7 11"><path d="M0 4H7L3.5 0Z M0 7H7L3.5 11Z" fill="#555"/></svg>
<svg style="left:1864px;top:985px;" width="14" height="14" viewBox="0 0 14 14"><path d="M3 6.5V3.5A3 3 0 0 1 9 3.5" fill="none" stroke="#7a7a7a" stroke-width="1.5"/><rect x="5" y="6.5" width="9" height="7" fill="#7a7a7a"/></svg>
<svg style="left:1895px;top:983px;" width="16" height="18" viewBox="0 0 16 18"><g fill="none" stroke="#6e6e6e" stroke-width="1.2"><path d="M3.5 7V3Q8 -0.5 12.5 3V7"/><path d="M1 8H15"/><path d="M3.5 8V11Q8 15 12.5 11V8"/><path d="M4 12L2 17H14L12 12"/></g><rect x="7" y="3" width="2" height="2" fill="#6e6e6e"/><circle cx="6" cy="10" r="0.9" fill="#6e6e6e"/><circle cx="10" cy="10" r="0.9" fill="#6e6e6e"/></svg>
<div class="a" style="left:0;top:1003px;width:1920px;height:9px;background:linear-gradient(90deg,#27392c 0px,#2d3e33 300px,#39474a 420px,#3d4a4b 1200px,#353f40 1350px,#222a2a 1410px,#333d3e 1480px,#3e4a4c 1600px,#3e4a4c 1920px)"></div>
<div class="a" style="left:247px;top:1010px;width:18px;height:2px;background:#ffffff;border-radius:2px 2px 0 0"></div>
<div class="a" style="left:281px;top:1010px;width:10px;height:2px;background:#e8b0b0;border-radius:2px 2px 0 0"></div>
<div class="a" style="left:306px;top:1010px;width:8px;height:2px;background:#111111;border-radius:2px 2px 0 0"></div>
<div class="a" style="left:356px;top:1010px;width:6px;height:2px;background:#2a8ad8;border-radius:2px 2px 0 0"></div>
<div class="a" style="left:381px;top:1010px;width:18px;height:2px;background:#1f5f9a;border-radius:2px 2px 0 0"></div>
<div class="a" style="left:415px;top:1010px;width:10px;height:2px;background:#c8b8b8;border-radius:2px 2px 0 0"></div>
<div class="a" style="left:445px;top:1010px;width:8px;height:2px;background:#333366;border-radius:2px 2px 0 0"></div>
<div class="a" style="left:470px;top:1010px;width:8px;height:2px;background:#e89a2a;border-radius:2px 2px 0 0"></div>
<div class="a" style="left:490px;top:1010px;width:16px;height:2px;background:#c8c8e8;border-radius:2px 2px 0 0"></div>
<div class="a" style="left:525px;top:1010px;width:8px;height:2px;background:#55aadd;border-radius:2px 2px 0 0"></div>
<div class="a" style="left:578px;top:1010px;width:8px;height:2px;background:#cc6666;border-radius:2px 2px 0 0"></div>
<div class="a" style="left:625px;top:1010px;width:12px;height:2px;background:#66aacc;border-radius:2px 2px 0 0"></div>
<div class="a" style="left:655px;top:1010px;width:10px;height:2px;background:#999999;border-radius:2px 2px 0 0"></div>
<div class="a" style="left:680px;top:1010px;width:18px;height:2px;background:#ffffff;border-radius:2px 2px 0 0"></div>
<div class="a" style="left:705px;top:1010px;width:8px;height:2px;background:#cccccc;border-radius:2px 2px 0 0"></div>
<div class="a" style="left:733px;top:1010px;width:18px;height:2px;background:#ffffff;border-radius:2px 2px 0 0"></div>
<div class="a" style="left:760px;top:1010px;width:18px;height:2px;background:#3a7fd0;border-radius:2px 2px 0 0"></div>
<div class="a" style="left:820px;top:1010px;width:4px;height:2px;background:#ccaa44;border-radius:2px 2px 0 0"></div>
<div class="a" style="left:840px;top:1010px;width:18px;height:2px;background:#ffffff;border-radius:2px 2px 0 0"></div>
<div class="a" style="left:872px;top:1010px;width:10px;height:2px;background:#333399;border-radius:2px 2px 0 0"></div>
<div class="a" style="left:895px;top:1010px;width:12px;height:2px;background:#e0407a;border-radius:2px 2px 0 0"></div>
<div class="a" style="left:1913px;top:1003px;width:1px;height:9px;background:#8a9090;"></div>
</body></html>
